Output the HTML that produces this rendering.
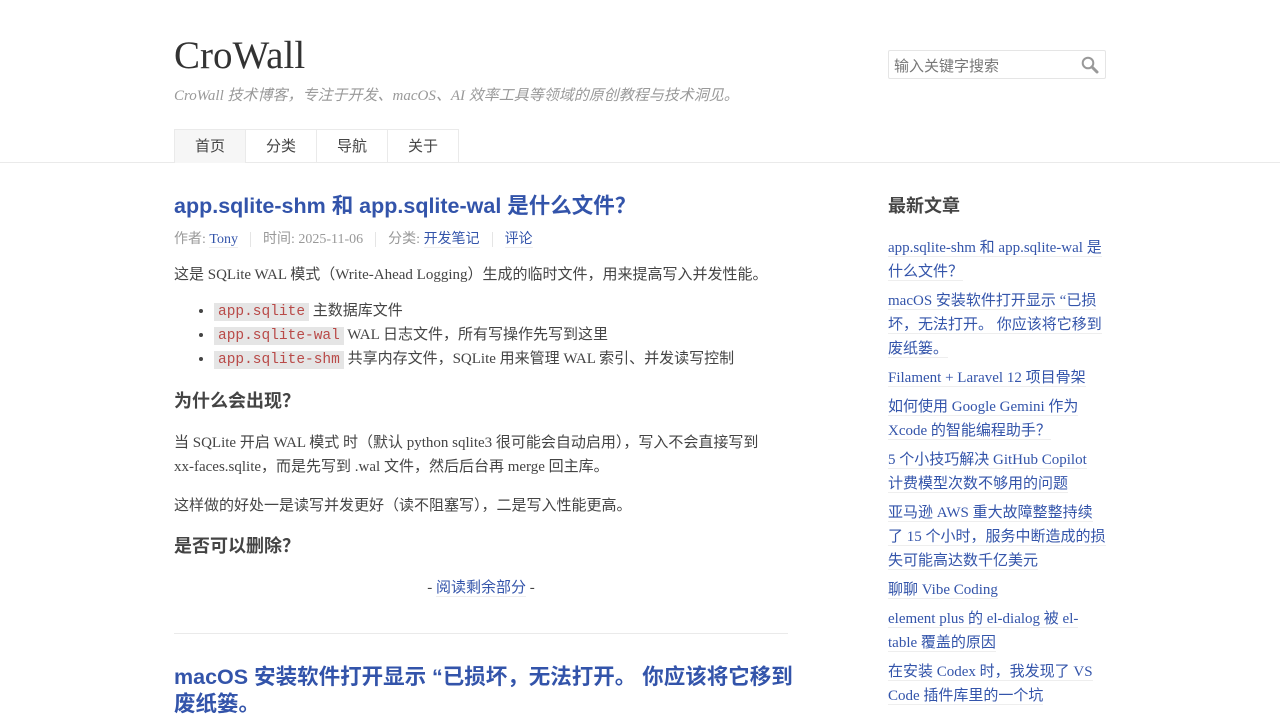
<!DOCTYPE html>
<html><head><meta charset="utf-8"><style>
*{box-sizing:border-box}
body{margin:0;background:#fff;color:#444;font-family:"Liberation Serif","Noto Sans CJK SC",serif;font-size:15px}
a{color:#3354aa;text-decoration:none;border-bottom:1px solid #eee}
.hd{height:163px;border-bottom:1px solid #eaeaea;position:relative}
.logo{position:absolute;left:174px;top:32px;font-size:39px;color:#333;line-height:48px}
.desc{position:absolute;left:174px;top:84px;font-size:15px;font-style:italic;color:#999}
.search{position:absolute;left:888px;top:50px;width:218px;height:29px;border:1px solid #e5e5e5;border-radius:2px;font-family:"Liberation Sans","Noto Sans CJK SC",sans-serif;font-size:15px;color:#777;padding:4px 5px}
.search svg{position:absolute;right:6px;top:5px}
.nav{position:absolute;left:174px;top:129px;display:flex;font-family:"Liberation Sans","Noto Sans CJK SC",sans-serif}
.nav div{height:34px;width:72px;border:1px solid #eaeaea;border-bottom:none;margin-right:-1px;text-align:center;line-height:33px;font-size:15px;color:#444}
.nav div.on{background:#f6f6f6}
.main{position:absolute;left:174px;top:191px;width:614px}
h2{font-family:"Liberation Sans","Noto Sans CJK SC",sans-serif;font-size:21.5px;color:#3354aa;margin:0;line-height:30px;font-weight:bold}
.meta{color:#999;font-size:14px;margin:9px 0 13px;line-height:20px}
.meta span{padding:0 12px;border-left:1px solid #e5e5e5}
.meta span:first-child{padding-left:0;border:none}
p{margin:0 0 15px;line-height:24px}
ul{margin:-2px 0 16px;padding-left:40px;line-height:23px}
code{font-family:"Liberation Mono",monospace;color:#b94a48;background:#e5e5e5;padding:1px 4px;font-size:14.5px}
h3{font-family:"Liberation Sans","Noto Sans CJK SC",sans-serif;font-size:18px;margin:0 0 17px;color:#444;line-height:26px}
.more{text-align:center;margin:10px 0 36px}
hr{border:none;border-top:1px solid #eaeaea;margin:0 0 30px}
.side{position:absolute;left:888px;top:192px;width:218px}
.side h4{font-family:"Liberation Sans","Noto Sans CJK SC",sans-serif;font-size:18px;margin:0 0 16px;color:#444;line-height:28px}
.side div{line-height:24px;margin-bottom:5px;font-size:15px}
</style></head><body>
<div class="hd">
<div class="logo">CroWall</div>
<div class="desc">CroWall 技术博客，专注于开发、macOS、AI 效率工具等领域的原创教程与技术洞见。</div>
<div class="search">输入关键字搜索<svg width="18" height="18" viewBox="0 0 18 18"><circle cx="7" cy="7" r="5.3" fill="none" stroke="#999" stroke-width="2"/><path d="M11 11l5 5" stroke="#999" stroke-width="3" stroke-linecap="round"/></svg></div>
<div class="nav"><div class="on">首页</div><div>分类</div><div>导航</div><div>关于</div></div>
</div>
<div class="main">
<h2>app.sqlite-shm 和 app.sqlite-wal 是什么文件？</h2>
<div class="meta"><span>作者: <a>Tony</a></span><span>时间: 2025-11-06</span><span>分类: <a>开发笔记</a></span><span><a>评论</a></span></div>
<p>这是 SQLite WAL 模式（Write-Ahead Logging）生成的临时文件，用来提高写入并发性能。</p>
<ul><li><code>app.sqlite</code> 主数据库文件</li><li><code>app.sqlite-wal</code> WAL 日志文件，所有写操作先写到这里</li><li><code>app.sqlite-shm</code> 共享内存文件，SQLite 用来管理 WAL 索引、并发读写控制</li></ul>
<h3 style="margin-top:15px">为什么会出现？</h3>
<p>当 SQLite 开启 WAL 模式 时（默认 python sqlite3 很可能会自动启用），写入不会直接写到<br>xx-faces.sqlite，而是先写到 .wal 文件，然后后台再 merge 回主库。</p>
<p>这样做的好处一是读写并发更好（读不阻塞写），二是写入性能更高。</p>
<h3>是否可以删除？</h3>
<div class="more">- <a>阅读剩余部分</a> -</div>
<hr>
<h2 style="width:640px;line-height:27px">macOS 安装软件打开显示 “已损坏，无法打开。 你应该将它移到<br>废纸篓。</h2>
</div>
<div class="side">
<h4>最新文章</h4>
<div><a>app.sqlite-shm 和 app.sqlite-wal 是什么文件？</a></div>
<div><a>macOS 安装软件打开显示 “已损坏，无法打开。 你应该将它移到废纸篓。</a></div>
<div><a>Filament + Laravel 12 项目骨架</a></div>
<div><a>如何使用 Google Gemini 作为 Xcode 的智能编程助手？</a></div>
<div><a>5 个小技巧解决 GitHub Copilot<br>计费模型次数不够用的问题</a></div>
<div><a>亚马逊 AWS 重大故障整整持续了 15 个小时，服务中断造成的损失可能高达数千亿美元</a></div>
<div><a>聊聊 Vibe Coding</a></div>
<div><a>element plus 的 el-dialog 被 el-table 覆盖的原因</a></div>
<div><a>在安装 Codex 时，我发现了 VS Code 插件库里的一个坑</a></div>
</div>
</body></html>
